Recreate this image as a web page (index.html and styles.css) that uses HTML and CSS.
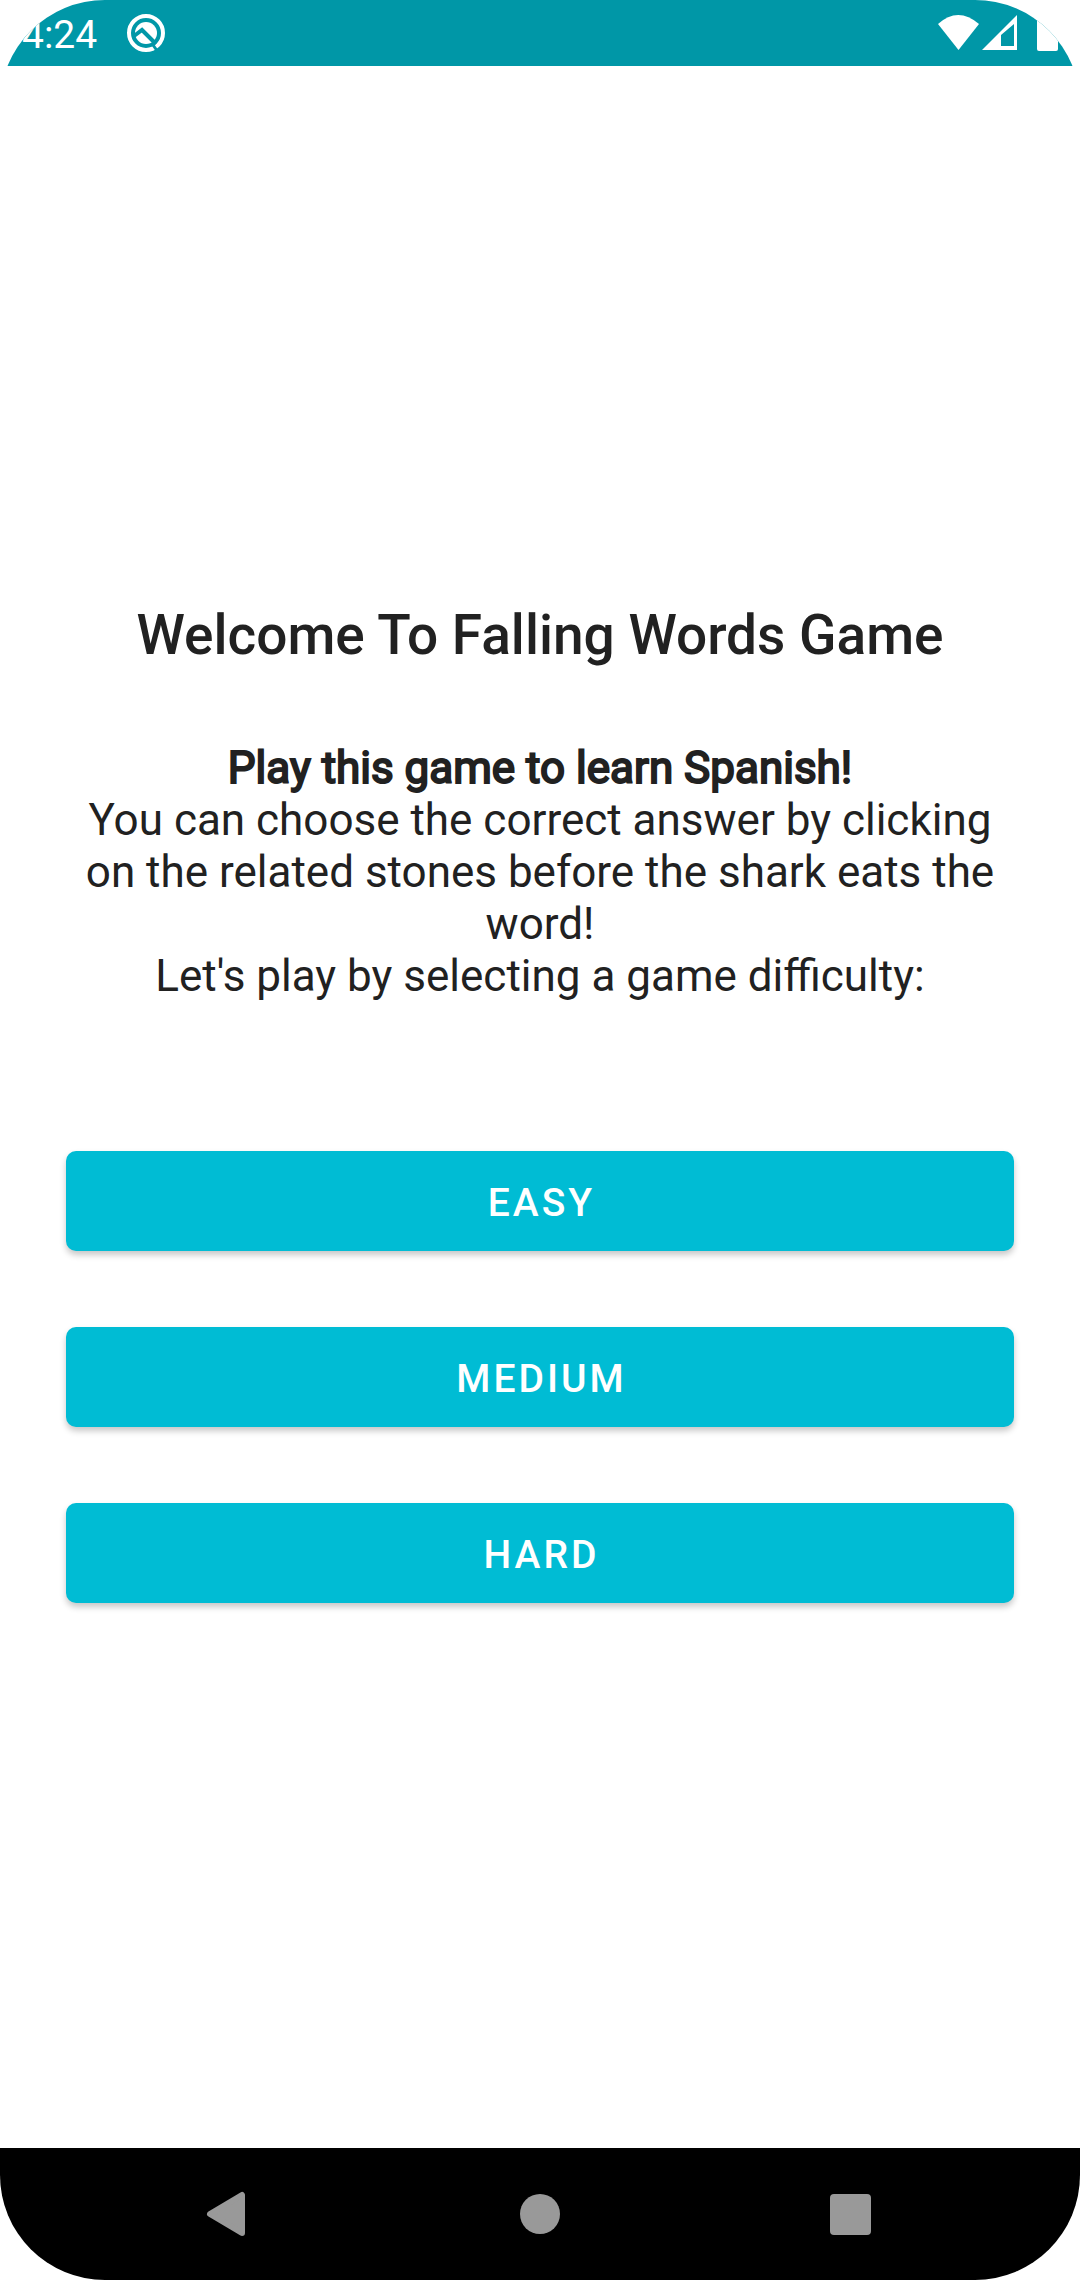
FILE: index.html
```html
<!DOCTYPE html>
<html lang="en">
<head>
<meta charset="utf-8">
<title>Falling Words Game</title>
<meta name="viewport" content="width=device-width, initial-scale=1">
<link rel="stylesheet" href="styles.css">
</head>
<body>
<div class="screen">
  <header class="status">
    <div class="status-side">
      <time>4:24</time>
      <svg viewBox="0 0 40 40" width="40" height="40" aria-hidden="true"><circle cx="20" cy="20" r="17" fill="none" stroke="#fff" stroke-width="4"/><circle cx="20" cy="20" r="11" fill="#fff"/><path d="M8 23l8-6L30 31" fill="none" stroke="#0097a7" stroke-width="4"/><path d="M27 32l5 7" stroke="#0097a7" stroke-width="3"/></svg>
    </div>
    <div class="status-side">
      <svg viewBox="0 0 120 40" width="120" height="40" aria-hidden="true"><path d="M0 11Q20-7 41 11L20.500 37Z" fill="#fff"/><path d="M44 37L79 2V37ZM63 22V33H76V11Z" fill="#fff" fill-rule="evenodd"/><rect x="99" y="0" width="21" height="38" rx="2" fill="#fff"/></svg>
    </div>
  </header>
  <main class="content">
    <h1>Welcome To Falling Words Game</h1>
    <p class="intro"><strong>Play this game to learn Spanish!</strong><br>You can choose the correct answer by clicking on the related stones before the shark eats the word!<br>Let's play by selecting a game difficulty:</p>
    <div class="levels">
      <button type="button">EASY</button>
      <button type="button">MEDIUM</button>
      <button type="button">HARD</button>
    </div>
  </main>
  <nav class="navbar" aria-label="System navigation">
    <button type="button" aria-label="Back"><svg viewBox="0 0 48 48" width="48" height="48"><path d="M36 5V43L4 24Z" fill="#999" stroke="#999" stroke-width="6" stroke-linejoin="round"/></svg></button>
    <button type="button" aria-label="Home"><svg viewBox="0 0 48 48" width="48" height="48"><circle cx="24" cy="24" r="20" fill="#999"/></svg></button>
    <button type="button" aria-label="Recents"><svg viewBox="0 0 48 48" width="48" height="48"><rect x="4" y="4" width="41" height="41" rx="4" fill="#999"/></svg></button>
  </nav>
</div>
</body>
</html>
```

FILE: styles.css
```css
body { margin: 0; background: #fff; font-family: Roboto, sans-serif; color: #212121; }
.screen { min-height: 100vh; display: flex; flex-direction: column; border-radius: 105px; overflow: hidden; }
.status { height: 66px; background: #0097a7; color: #fff; display: flex; justify-content: space-between; align-items: center; padding: 0 22px; font-size: 39px; }
.status-side { display: flex; align-items: center; gap: 29px; }
.status time { padding-top: 3px; }
.content { flex: 1; display: flex; flex-direction: column; justify-content: center; padding: 0 66px 8px; text-align: center; }
h1 { margin: 0; font-size: 55px; line-height: 64px; font-weight: 500; }
.intro { margin: 75px 0 0; font-size: 44px; line-height: 52px; }
.intro strong { font-weight: 400; -webkit-text-stroke: 2px currentColor; }
.levels { display: flex; flex-direction: column; gap: 76px; margin-top: 149px; }
.levels button { height: 100px; border: 0; border-radius: 10px; background: #00bcd4; color: #fff; font: 500 39px Roboto, sans-serif; letter-spacing: 3px; padding: 4px 0 0 3px; box-shadow: 0 4px 6px rgba(0,0,0,.22); }
.navbar { height: 132px; background: #000; display: flex; justify-content: center; gap: 262px; }
.navbar button { border: 0; padding: 0; background: none; display: flex; align-items: center; }
```
